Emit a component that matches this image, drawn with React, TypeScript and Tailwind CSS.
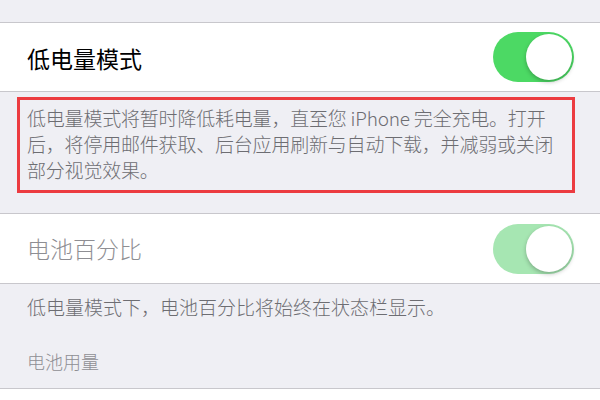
const font = { fontFamily: '"Noto Sans CJK SC", "Noto Sans", sans-serif' };

function Toggle({ dim = false }: { dim?: boolean }) {
  return (
    <div
      className={`relative h-[50px] w-[81px] rounded-full ${
        dim ? "bg-[#a6e6b2]" : "bg-[#4cd964]"
      }`}
    >
      <div className="absolute right-[2px] top-[2px] h-[46px] w-[46px] rounded-full bg-white shadow-[0_2px_4px_rgba(0,0,0,0.25)]" />
    </div>
  );
}

export default function App() {
  return (
    <div className="flex h-[400px] w-[600px] flex-col overflow-hidden bg-[#efeff4]" style={font}>
      <div className="h-[22px] shrink-0" />

      {/* Low power mode row */}
      <div className="flex h-[70px] shrink-0 items-center justify-between border-y border-[#c8c7cc] bg-white pl-[27px] pr-[26px]">
        <span className="pt-[2px] text-[23px] leading-none text-black">低电量模式</span>
        <Toggle />
      </div>

      <div className="mx-[17px] mt-[5px] w-[558px] border-[3px] border-[#ec3b40] pb-[7px] pl-[7px] pr-[4px] pt-[5px]">
        <p className="text-[19px] font-light leading-[26px] tracking-[-0.2px] text-[#6d6d72]">
          低电量模式将暂时降低耗电量，直至您 iPhone 完全充电。打开后，将停用邮件获取、后台应用刷新与自动下载，并减弱或关闭部分视觉效果。
        </p>
      </div>

      <div className="h-[20px] shrink-0" />

      {/* Battery percentage row */}
      <div className="flex h-[71px] shrink-0 items-center justify-between border-y border-[#c8c7cc] bg-white pl-[27px] pr-[26px]">
        <span className="text-[23px] font-light leading-none text-[#8e8e93]">电池百分比</span>
        <Toggle dim />
      </div>

      <p className="pl-[27px] pt-[10px] text-[19px] font-light leading-[26px] text-[#6d6d72]">
        低电量模式下，电池百分比将始终在状态栏显示。
      </p>

      <p className="mt-[28px] pl-[27px] text-[18px] font-light leading-[26px] text-[#8e8e93]">电池用量</p>

      <div className="mt-[14px] flex-1 border-t border-[#c8c7cc] bg-white" />
    </div>
  );
}
